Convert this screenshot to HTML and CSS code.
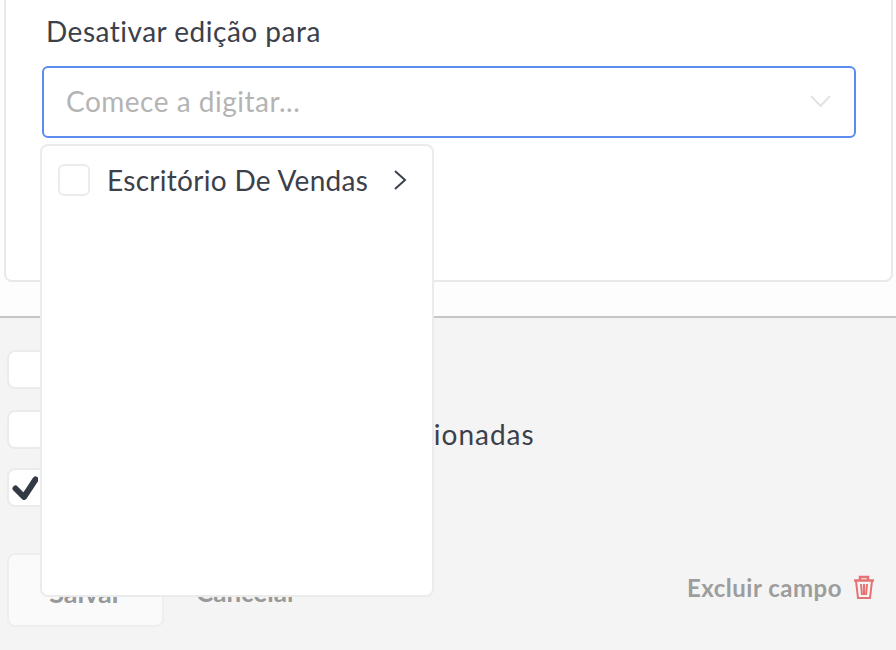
FILE: index.html
```html
<!DOCTYPE html>
<html lang="pt">
<head>
    <meta charset="UTF-8">
    <meta name="viewport" content="width=device-width, initial-scale=1.0">
    <title>Desativar edição</title>
    <link rel="stylesheet" href="styles.css">
</head>
<body>
    <section class="panel">
        <div class="card">
            <label class="field-label">Desativar edição para</label>
            <div class="select">
                <span class="placeholder">Comece a digitar...</span>
                <svg class="select-arrow" width="21" height="12" viewBox="0 0 21 12">
                    <path d="M1 1l9.5 10L20 1" fill="none" stroke="#e3e3e3" stroke-width="2"/>
                </svg>
                <div class="dropdown">
                    <div class="option">
                        <span class="checkbox"></span>
                        <span class="option-name">Escritório De Vendas</span>
                        <svg width="14" height="22" viewBox="0 0 14 22">
                            <path d="M2 2l10 9-10 9" fill="none" stroke="#3b404b" stroke-width="2"/>
                        </svg>
                    </div>
                </div>
            </div>
        </div>
    </section>

    <footer class="actions">
        <div class="check-row">
            <span class="checkbox big"></span>
            <span class="check-label">Campo obrigatório</span>
        </div>
        <div class="check-row second">
            <span class="checkbox big"></span>
            <span class="check-label">Mostrar apenas opções selecionadas</span>
        </div>
        <div class="check-row last">
            <span class="checkbox big">
                <svg class="check-mark" width="26" height="24" viewBox="0 0 26 24">
                    <path d="M3.5 12.5l8.5 8.5L23.5 3.5" fill="none" stroke="#343a45" stroke-width="6" stroke-linecap="round" stroke-linejoin="round"/>
                </svg>
            </span>
            <span class="check-label">Visível</span>
        </div>
        <div class="button-row">
            <button class="btn-save">Salvar</button>
            <button class="btn-cancel">Cancelar</button>
            <a class="delete-link">
                Excluir campo
                <svg width="22" height="25" viewBox="0 0 22 25">
                    <g fill="none" stroke="#e57373">
                        <path stroke-width="2.5" d="M1 5.5h20M7 5V2h8v3"/>
                        <path stroke-width="2" d="M3 6l2 17h12l2-17M8 9l1 11M14 9l-1 11M11 9v11"/>
                    </g>
                </svg>
            </a>
        </div>
    </footer>
</body>
</html>
```

FILE: styles.css
```css
body {
    margin: 0;
    font-family: Lato, "Open Sans", sans-serif;
    font-size: 28px;
    letter-spacing: 0.5px;
    color: #3b404b;
    background-color: #f4f4f4;
    height: 650px;
    overflow: hidden;
}

.panel {
    height: 316px;
    padding: 0 3px 0 4px;
    background-color: #fdfdfd;
    border-bottom: 2px solid #c6c6c6;
}

.card {
    height: 282px;
    box-sizing: border-box;
    padding: 13px 35px 0 36px;
    background-color: #fff;
    border: 2px solid #e9e9e9;
    border-top: none;
    border-radius: 0 0 8px 8px;
}

.field-label {
    display: block;
    margin: 0 0 17px 4px;
    line-height: 36px;
}

.select {
    position: relative;
    display: flex;
    align-items: center;
    justify-content: space-between;
    height: 72px;
    box-sizing: border-box;
    padding: 0 23px 2px 22px;
    background-color: #fff;
    border: 2px solid #5b8def;
    border-radius: 6px;
}

.placeholder {
    color: #b4b4b4;
}

.dropdown {
    position: absolute;
    top: 76px;
    left: -4px;
    width: 394px;
    height: 453px;
    box-sizing: border-box;
    padding: 16px 25px 0 16px;
    background-color: #fff;
    border: 2px solid #ebebeb;
    border-radius: 8px;
    z-index: 2;
}

.option {
    display: flex;
    align-items: center;
}

.option-name {
    flex: 1;
    margin-left: 17px;
    line-height: 36px;
    letter-spacing: 0.3px;
}

.checkbox {
    display: block;
    flex: none;
    width: 32px;
    height: 32px;
    box-sizing: border-box;
    background-color: #fff;
    border: 2px solid #ebebeb;
    border-radius: 6px;
}

.checkbox.big {
    display: flex;
    align-items: center;
    justify-content: center;
    width: 40px;
    height: 39px;
    border-radius: 8px;
}

.check-mark {
    margin-left: -4px;
}

.actions {
    padding: 32px 0 0 7px;
}

.check-row {
    display: flex;
    align-items: center;
    gap: 6px;
    height: 39px;
    margin-bottom: 21px;
}

.check-row.second {
    margin-bottom: 19px;
}

.check-row.last {
    margin-bottom: 46px;
}

.check-label {
    margin-top: 8px;
    letter-spacing: 1px;
}

.button-row {
    display: flex;
    align-items: center;
    padding-right: 21px;
}

.btn-save {
    width: 157px;
    height: 74px;
    padding: 4px 0 0;
    font: bold 27px Lato, sans-serif;
    color: #999;
    background-color: #fafafa;
    border: 2px solid #eeeeee;
    border-radius: 8px;
}

.btn-cancel {
    margin-left: 32px;
    padding: 4px 0 0;
    font: bold 26px Lato, sans-serif;
    color: #999;
    background: none;
    border: none;
}

.delete-link {
    display: flex;
    align-items: center;
    gap: 11px;
    margin-left: auto;
    margin-bottom: 6px;
    font-size: 24px;
    font-weight: bold;
    color: #9d9d9d;
}
```
